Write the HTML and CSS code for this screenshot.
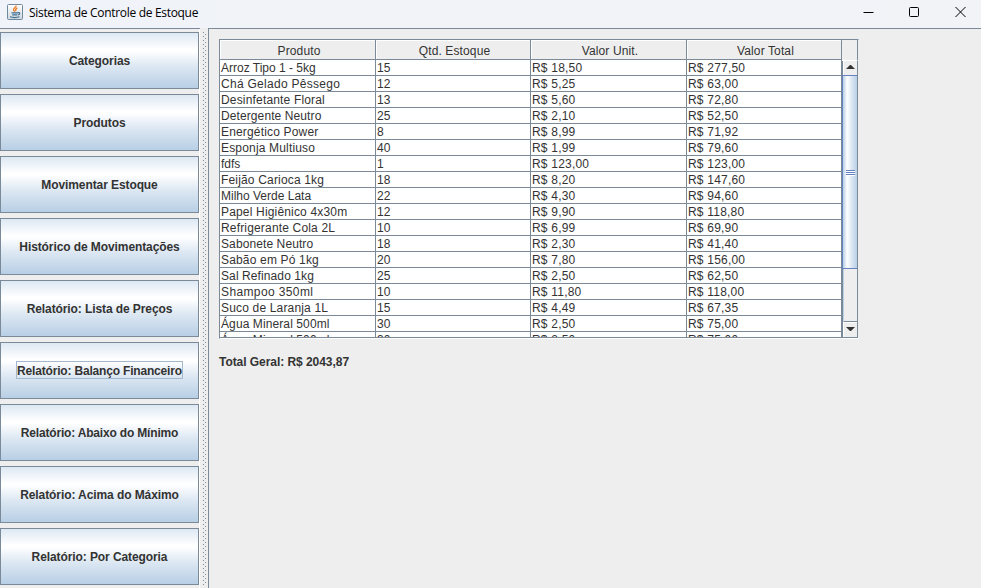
FILE: index.html
```
<!DOCTYPE html>
<html lang="pt-BR">
<head>
<meta charset="utf-8">
<title>Sistema de Controle de Estoque</title>
<link rel="stylesheet" href="styles.css">
</head>
<body>
<header class="titlebar">
  <svg class="app-icon" width="16" height="16" viewBox="0 0 16 16">
    <defs><linearGradient id="g" x1="0" y1="0" x2="0" y2="1"><stop offset="0" stop-color="#fff"/><stop offset="1" stop-color="#cfd8df"/></linearGradient></defs>
    <rect x=".5" y=".5" width="15" height="15" rx="1" fill="url(#g)" stroke="#70899c"/>
    <path d="M9 1.500c.6 2-3 2.500-2.500 4.300.2.800 1 1 1 1.900M10.500 3.800c-2 .8-2.300 1.800-1.500 3.400" fill="none" stroke="#e8802a" stroke-width="1.400"/>
    <path d="M4.500 8.800h6.500M5.300 10.800h5M3 12.800q4.500 1.500 9.500 0M11 8.800c2.500-.6 2.200 1.700 0 2.200" fill="none" stroke="#3f6f92" stroke-width="1.200"/>
  </svg>
  <span class="title">Sistema de Controle de Estoque</span>
  <div class="controls">
    <svg width="11" height="12" viewBox="0 0 11 12"><path d="M.5 6.500h10"/></svg>
    <svg width="11" height="12" viewBox="0 0 11 12"><rect x=".5" y="1.500" width="9" height="9" rx="1"/></svg>
    <svg width="11" height="12" viewBox="0 0 11 12"><path d="M.5 1l10 10M10.500 1l-10 10"/></svg>
  </div>
</header>
<main class="split">
  <nav class="menu">
    <button><span>Categorias</span></button>
    <button><span>Produtos</span></button>
    <button><span>Movimentar Estoque</span></button>
    <button><span>Histórico de Movimentações</span></button>
    <button><span>Relatório: Lista de Preços</span></button>
    <button class="focused tight"><span>Relatório: Balanço Financeiro</span></button>
    <button class="tight"><span>Relatório: Abaixo do Mínimo</span></button>
    <button><span>Relatório: Acima do Máximo</span></button>
    <button><span>Relatório: Por Categoria</span></button>
  </nav>
  <div class="divider"><i></i></div>
  <section class="content">
    <div class="scrollpane">
      <div class="viewport">
        <table>
          <colgroup><col class="c1"><col class="c2"><col class="c1"><col class="c2"></colgroup>
          <thead><tr><th>Produto</th><th>Qtd. Estoque</th><th>Valor Unit.</th><th>Valor Total</th></tr></thead>
          <tbody>
            <tr><td>Arroz Tipo 1 - 5kg</td><td>15</td><td>R$ 18,50</td><td>R$ 277,50</td></tr>
            <tr class="w3"><td>Chá Gelado Pêssego</td><td>12</td><td>R$ 5,25</td><td>R$ 63,00</td></tr>
            <tr class="w2"><td>Desinfetante Floral</td><td>13</td><td>R$ 5,60</td><td>R$ 72,80</td></tr>
            <tr class="w1"><td>Detergente Neutro</td><td>25</td><td>R$ 2,10</td><td>R$ 52,50</td></tr>
            <tr class="w2"><td>Energético Power</td><td>8</td><td>R$ 8,99</td><td>R$ 71,92</td></tr>
            <tr class="w2"><td>Esponja Multiuso</td><td>40</td><td>R$ 1,99</td><td>R$ 79,60</td></tr>
            <tr><td>fdfs</td><td>1</td><td>R$ 123,00</td><td>R$ 123,00</td></tr>
            <tr class="w2"><td>Feijão Carioca 1kg</td><td>18</td><td>R$ 8,20</td><td>R$ 147,60</td></tr>
            <tr><td>Milho Verde Lata</td><td>22</td><td>R$ 4,30</td><td>R$ 94,60</td></tr>
            <tr class="w2"><td>Papel Higiênico 4x30m</td><td>12</td><td>R$ 9,90</td><td>R$ 118,80</td></tr>
            <tr class="w2"><td>Refrigerante Cola 2L</td><td>10</td><td>R$ 6,99</td><td>R$ 69,90</td></tr>
            <tr class="w1"><td>Sabonete Neutro</td><td>18</td><td>R$ 2,30</td><td>R$ 41,40</td></tr>
            <tr class="w2"><td>Sabão em Pó 1kg</td><td>20</td><td>R$ 7,80</td><td>R$ 156,00</td></tr>
            <tr class="w1"><td>Sal Refinado 1kg</td><td>25</td><td>R$ 2,50</td><td>R$ 62,50</td></tr>
            <tr class="w4"><td>Shampoo 350ml</td><td>10</td><td>R$ 11,80</td><td>R$ 118,00</td></tr>
            <tr class="w2"><td>Suco de Laranja 1L</td><td>15</td><td>R$ 4,49</td><td>R$ 67,35</td></tr>
            <tr class="w1"><td>Água Mineral 500ml</td><td>30</td><td>R$ 2,50</td><td>R$ 75,00</td></tr>
            <tr class="w1"><td>Água Mineral 500ml</td><td>30</td><td>R$ 2,50</td><td>R$ 75,00</td></tr>
          </tbody>
        </table>
      </div>
      <div class="side">
        <div class="corner"></div>
        <div class="scrollbar">
          <div class="arrow up"><svg width="9" height="4" viewBox="0 0 9 4"><path d="M0 4h9L5 0H4z"/></svg></div>
          <div class="thumb"><i></i></div>
          <div class="track"></div>
          <div class="arrow down"><svg width="9" height="4" viewBox="0 0 9 4"><path d="M0 0h9L5 4H4z"/></svg></div>
        </div>
      </div>
    </div>
    <p class="total">Total Geral: R$ 2043,87</p>
  </section>
</main>
</body>
</html>
```
FILE: styles.css
```
* { box-sizing: border-box; }
body {
  margin: 0;
  width: 981px;
  height: 588px;
  overflow: hidden;
  background: #eee;
  color: #333;
  font: 12px/15px "Liberation Sans", Arial, sans-serif;
}
.titlebar { display: flex; align-items: center; height: 28px; padding: 0 15px 3px 7px; background: linear-gradient(90deg, #f0f3f9, #f2f3f7); }
.app-icon { margin-top: -1px; }
.title { margin-left: 6px; font: 12px/16px "Open Sans", "Noto Sans", sans-serif; letter-spacing: -.31px; color: #000; }
.controls { display: flex; gap: 35px; margin-left: auto; margin-top: -1px; }
.controls svg { fill: none; stroke: #000; stroke-width: 1; }
.split { display: flex; height: 560px; }
.menu { display: flex; flex-direction: column; gap: 5px; width: 200px; padding: 3px 1px 0 0; border-top: 1px solid #7a8a99; box-shadow: inset -1px 0 #fff; }
.menu button {
  display: flex;
  flex: none;
  align-items: center;
  justify-content: center;
  width: 199px;
  height: 57px;
  padding: 0 0 1px;
  border: 1px solid #7a8a99;
  background: linear-gradient(#dde8f3 0%, #fff 30%, #fff 33%, #dde8f3 60%, #b8cfe5 100%);
  color: #333;
  font: bold 12px/14px "Liberation Sans", Arial, sans-serif;
  letter-spacing: -.09px;
}
.menu .tight { letter-spacing: -.18px; }
.menu span { height: 18px; padding: 2px 0 0; border: 1px solid transparent; white-space: nowrap; }
.menu .focused span { border-color: #a3b8cc; }
.divider { width: 8px; padding: 4px 2px 3px 3px; }
.divider i {
  display: block;
  width: 3px;
  height: 100%;
  background:
    repeating-linear-gradient(#7a8a99 0 1px, transparent 1px 4px) 0 0 / 1px 100% no-repeat,
    repeating-linear-gradient(transparent 0 2px, #7a8a99 2px 3px, transparent 3px 4px) 2px 0 / 1px 100% no-repeat;
}
.content { flex: 1; padding: 10px; border-top: 1px solid #7a8a99; border-left: 1px solid #7a8a99; }
.scrollpane { display: flex; width: 640px; height: 300px; border: 1px solid #7a8a99; border-right-color: #eee; border-bottom-color: #fff; }
.viewport { width: 622px; height: 298px; overflow: hidden; border-bottom: 1px solid #7a8a99; background: #fff; }
table { width: 622px; table-layout: fixed; border-collapse: separate; border-spacing: 0; }
.c1 { width: 156px; }
.c2 { width: 155px; }
th { height: 20px; padding: 3px 0 0 3px; border-right: 1px solid #7a8a99; border-bottom: 1px solid #7a8a99; background: #eee; box-shadow: inset 1px 1px #fff; font-weight: normal; line-height: 15px; letter-spacing: .12px; }
td { height: 16px; padding: 1px 0 0 1px; border-right: 1px solid #7a8a99; border-bottom: 1px solid #7a8a99; line-height: 14px; white-space: nowrap; letter-spacing: .2px; }
td:first-child { letter-spacing: 0; }
.w1 td:first-child { letter-spacing: .1px; }
.w2 td:first-child { letter-spacing: .17px; }
.w3 td:first-child { letter-spacing: .28px; }
.w4 td:first-child { letter-spacing: .38px; }
.side { width: 16px; border-right: 1px solid #7a8a99; border-bottom: 1px solid #7a8a99; }
.corner { height: 21px; margin-right: -1px; border-right: 1px solid #7a8a99; border-bottom: 1px solid #fff; }
.scrollbar { display: flex; flex-direction: column; height: 276px; border-left: 1px solid #7a8a99; }
.arrow { display: flex; align-items: center; justify-content: center; height: 14px; border-left: 1px solid #fff; }
.arrow svg { fill: #333; }
.up { padding-bottom: 2px; }
.down { height: 16px; padding-bottom: 1px; border-top: 1px solid #7a8a99; box-shadow: inset 0 1px #fff; }
.thumb { display: flex; align-items: center; justify-content: center; height: 194px; margin-left: -1px; border: 1px solid #6382bf; border-right: 0; background: linear-gradient(90deg, #b8cfe5, #fff 30%, #dde8f3 60%, #b8cfe5); }
.thumb i { width: 9px; height: 6px; margin-top: 2px; background: repeating-linear-gradient(#6382bf 0 1px, #fff 1px 2px); }
.track { flex: 1; border-left: 1px solid #b8cfe5; }
.total { margin: 16px 0 0; font-weight: bold; line-height: 15px; letter-spacing: -.05px; }
```
